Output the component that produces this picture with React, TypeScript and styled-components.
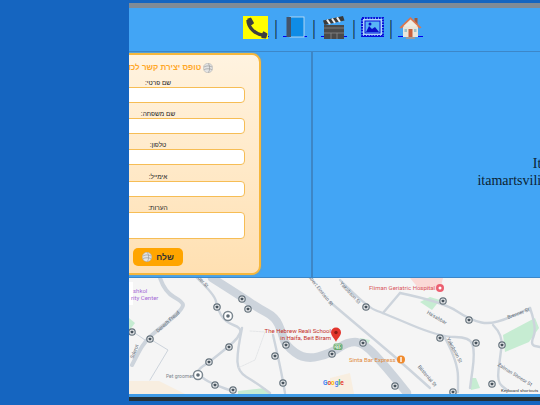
import React from "react";
import styled, { createGlobalStyle } from "styled-components";

const GlobalStyle = createGlobalStyle`
  html, body {
    margin: 0;
    height: 405px;
    overflow: hidden;
    background: #1565c0;
  }
  #root { height: 405px; }
`;

const Page = styled.div`
  display: flex;
  width: 540px;
  height: 405px;
  background: #1565c0;
`;

const Sidebar = styled.aside`
  flex: 0 0 129px;
  background: #1565c0;
`;

const Main = styled.main`
  flex: 1;
  min-width: 0;
  display: flex;
  flex-direction: column;
  overflow: hidden;
  padding: 3px 0 4px;
`;

const TopBar = styled.div`
  height: 5px;
  flex: none;
  background: #808b96;
`;

const Nav = styled.nav`
  height: 43px;
  flex: none;
  box-sizing: border-box;
  padding: 8px 3px 0 0;
  display: flex;
  align-items: flex-start;
  justify-content: center;
  gap: 6px;
  background: #42a5f5;
`;

const NavLink = styled.a<{ w: number }>`
  position: relative;
  width: ${({ w }) => w}px;
  height: 23px;
  display: flex;
  justify-content: center;
  &::after {
    content: "";
    position: absolute;
    left: 0;
    right: 0;
    bottom: 2px;
    height: 1px;
    background: #0000ee;
  }
  svg { position: relative; z-index: 1; }
`;

const Sep = styled.span`
  width: 2px;
  display: flex;
  justify-content: center;
  font: 20px "Liberation Serif", serif;
  line-height: 23px;
  color: #12304a;
`;

const ContentRow = styled.section`
  height: 227px;
  flex: none;
  display: flex;
  border-top: 1px solid #3c87c9;
  border-bottom: 1px solid #3c87c9;
  box-sizing: border-box;
  background: #42a5f5;
`;

const FormColumn = styled.div`
  flex: 0 0 182px;
  display: flex;
  justify-content: flex-end;
  overflow: hidden;
  border-right: 2px solid #3d86c6;
`;

const ContactForm = styled.form`
  flex: 0 0 206px;
  box-sizing: border-box;
  margin: 1px 50px 2px 0;
  height: 222px;
  padding: 7px 14px 0;
  direction: rtl;
  display: flex;
  flex-direction: column;
  align-items: center;
  border: 2px solid #f6b73c;
  border-radius: 9px;
  background: linear-gradient(180deg, #fff3e0, #ffe0b2);
  box-shadow: 0 0 2px rgba(230, 150, 30, 0.5);
  font-family: "Liberation Sans", sans-serif;
`;

const FormTitle = styled.h2`
  margin: 0 0 6.5px 6px;
  display: flex;
  align-items: center;
  gap: 2px;
  height: 11px;
  white-space: nowrap;
  font-size: 8px;
  font-weight: bold;
  color: #ffa726;
`;

const Field = styled.div`
  display: flex;
  flex-direction: column;
  align-items: center;
  margin-bottom: 8.4px;
`;

const FieldLabel = styled.label`
  height: 7px;
  line-height: 6px;
  font-size: 6.5px;
  color: #222;
`;

const TextInput = styled.input`
  display: block;
  box-sizing: border-box;
  width: 174px;
  height: 16px;
  padding: 0;
  background: #fff;
  border: 1.5px solid #f6bd55;
  border-radius: 4px;
  outline: none;
`;

const NotesInput = styled.textarea`
  display: block;
  box-sizing: border-box;
  width: 174px;
  height: 27px;
  padding: 0;
  background: #fff;
  border: 1.5px solid #f6bd55;
  border-radius: 4px;
  outline: none;
  resize: none;
`;

const SendButton = styled.button`
  margin-top: 1px;
  width: 50px;
  height: 18px;
  padding: 0;
  display: flex;
  align-items: center;
  justify-content: center;
  gap: 4px;
  border: none;
  border-radius: 5px;
  background: #ffa500;
  color: #333;
  font: bold 8.5px "Liberation Sans", sans-serif;
`;

const InfoPanel = styled.div`
  flex: 0 0 472px;
  box-sizing: border-box;
  padding-top: 103px;
  text-align: center;
  font: 14px/17px "Liberation Serif", serif;
  color: #0b1f33;
`;

const Name = styled.span`
  margin-left: 4px;
`;

const MapFrame = styled.div`
  flex: 1;
  min-height: 0;
  background: #f5f5f5;
  svg { display: block; }
`;

const Footer = styled.div`
  height: 4px;
  flex: none;
  background: #263238;
  border-top: 3px solid #3f9be6;
`;

const Ball = ({ size }: { size: number }) => (
  <svg width={size} height={size} viewBox="0 0 20 20">
    <circle cx="10" cy="10" r="9.5" fill="#e4e4e4" stroke="#a8a8a8" />
    <path d="M2 8c5-3 11-3 16 0M2 13c5-2 11-2 16 0M11 1c3 5 3 13 0 18" fill="none" stroke="#9a9a9a" strokeWidth="1.4" />
  </svg>
);

const PhoneIcon = () => (
  <svg width="26" height="23" viewBox="0 0 26 23">
    <rect x="0" width="25" height="23" fill="#ffff00" />
    <path d="M5 4C5 11 12 19 21 19" fill="none" stroke="#3f3f3f" strokeWidth="3.4" />
    <path d="M4.500 3.500 7.500 2.500l2.500 4.500-3 2M20 16l3.500 2-1 3.500-4-.5" fill="#3f3f3f" stroke="#3f3f3f" strokeWidth="1.800" strokeLinejoin="round" />
  </svg>
);

const BookIcon = () => (
  <svg width="24" height="23" viewBox="0 0 24 23">
    <rect x="7" y="1" width="14" height="20" fill="#0f8ce6" stroke="#cfe3f2" strokeWidth=".8" />
    <rect x="3.500" y="1" width="4.500" height="20" fill="#44546a" />
  </svg>
);

const ClapperIcon = () => (
  <svg width="26" height="23" viewBox="0 0 26 23">
    <rect x="3" y="9" width="20" height="14" fill="#4a4a4a" />
    <path d="M3 12h20M3 17h20M10 17v6M16 17v6" stroke="#8a8a8a" strokeWidth=".8" />
    <path d="M2 4.500 22 0l1.500 4.500L3.500 9z" fill="#3a3a3a" />
    <path d="M6 3.600 9 8M11 2.500 14 7M16 1.400 19 6" stroke="#eee" strokeWidth="2" />
  </svg>
);

const PictureIcon = () => (
  <svg width="23" height="23" viewBox="0 0 23 23">
    <rect x="1" y="2" width="21" height="18" fill="#a8d4fa" stroke="#0a10d8" strokeWidth="2" strokeDasharray="2 .8" />
    <rect x="4" y="5" width="15" height="12" fill="#58b4f6" stroke="#0a10d8" />
    <path d="M5 16l3-6 3 3 3-2 4 5z" fill="#0a10c8" />
    <circle cx="9" cy="8" r="1.500" fill="#0a10c8" />
  </svg>
);

const HouseIcon = () => (
  <svg width="25" height="23" viewBox="0 0 25 23">
    <rect x="16.500" y="2" width="3" height="6" fill="#a05a3c" />
    <path d="M5 10h15v11H5z" fill="#e9e6dc" />
    <path d="M1.500 11.500 12.500 1l11 10.500-2 1L12.500 5l-9 7.500z" fill="#d9764f" />
    <path d="M12.500 3.500 5 10.500h15z" fill="#f0ece0" />
    <rect x="10.500" y="13" width="4" height="8" fill="#c8603c" />
    <rect x="6.500" y="13" width="2.500" height="3" fill="#9fc4c8" />
    <rect x="16" y="13" width="2.500" height="3" fill="#9fc4c8" />
    <rect x="8" y="21" width="9" height="2" fill="#9c9c9c" />
  </svg>
);

// rounds the corners of a road given as a list of map points
const smooth = (pts: number[][]) => {
  let d = `M${pts[0][0]} ${pts[0][1]}`;
  for (let i = 1; i < pts.length - 1; i++) {
    const mx = (pts[i][0] + pts[i + 1][0]) / 2;
    const my = (pts[i][1] + pts[i + 1][1]) / 2;
    d += `Q${pts[i][0]} ${pts[i][1]} ${mx} ${my}`;
  }
  const last = pts[pts.length - 1];
  return `${d}L${last[0]} ${last[1]}`;
};

const busStops: [number, number][] = [
  [242, 299], [248, 309], [217, 307], [229, 347], [209, 362], [215, 385], [233, 390],
  [283, 383], [275, 356], [286, 345], [332, 354], [132, 332], [150, 339], [366, 307],
  [443, 301], [469, 320], [440, 338], [476, 343], [502, 345], [363, 343], [395, 386],
  [453, 392], [492, 384],
];

const bigStops: [number, number][] = [[228, 316], [198, 375]];

const thinRoads = [
  [[197, 278], [215, 295], [217, 308], [225, 322], [242, 328], [238, 338], [228, 347], [208, 363], [197, 370], [202, 378], [215, 385], [235, 392]],
  [[242, 328], [237, 352], [238, 372], [255, 382], [270, 393]],
  [[273, 335], [280, 365], [285, 393]],
  [[340, 280], [367, 307], [383, 313], [440, 337], [470, 337], [475, 352], [470, 388]],
  [[400, 293], [383, 313]],
  [[400, 293], [443, 302], [470, 320], [493, 325], [530, 308]],
  [[493, 325], [503, 335], [500, 358], [497, 382], [507, 390]],
  [[530, 308], [537, 328], [530, 345], [540, 347]],
  [[330, 302], [357, 325], [393, 355], [430, 388]],
  [[445, 338], [458, 362], [458, 392]],
];

const mainRoad = [[212, 278], [242, 297], [258, 308], [275, 317], [282, 332], [285, 345], [305, 360], [332, 353], [347, 342], [363, 342], [387, 368], [407, 393]];
const curlRoad = [[160, 278], [165, 292], [183, 302], [183, 308], [168, 322], [145, 340], [132, 365]];

const roadNames: [string, number, number, number][] = [
  ["Derech Freud", 169, 323, -42],
  ["Albert Einstein St", 319, 291, 52],
  ["Yakobson St", 349, 294, 47],
  ["Ha'sabbar", 436, 319, 30],
  ["Yakobson St", 453, 351, 62],
  ["Bilstenlal St", 426, 377, 50],
  ["Brenner St", 519, 315, -20],
  ["Zalman Shneor St", 514, 376, 32],
  ["der St", 202, 283, 48],
  ["Sderot", 136, 352, -68],
];

const MapView = () => (
  <svg width="411" height="116" viewBox="129 278 411 116" fontFamily="Roboto, sans-serif">
    <rect x="129" y="278" width="411" height="116" fill="#f5f5f5" />
    <path d="M129 381h30l26 13H129z" fill="#f8eee0" />
    <path d="M330 378l20-5 4 21h-24z" fill="#f8eee0" />
    <path d="M410 278h33l-3 12-20 0z" fill="#fbd9d6" />
    <path d="M420 302l10-5 10 3-8 10z" fill="#c6ecd2" />
    <path d="M503 335l32-17 4 10-10 14-24 10z" fill="#c6ecd2" />
    <path d="M471 378h5l4 10-9 2z" fill="#c6ecd2" />
    <path d="M360 338l10 2-4 9-6-4z" fill="#c6ecd2" />
    <path d="M129 318l6 5-6 8z" fill="#c6ecd2" />
    <path d="M238 391l27-3 6 6h-33z" fill="#c6ecd2" />
    <rect x="129" y="282" width="4" height="23" fill="#fff" />
    <g fill="none" stroke="#cdd4dc" strokeLinecap="round" strokeLinejoin="round">
      <path d={smooth(mainRoad)} strokeWidth="8.500" />
      <path d={smooth(curlRoad)} strokeWidth="4" />
      {thinRoads.map((pts) => (
        <path key={pts[0].join()} d={smooth(pts)} strokeWidth="2.400" />
      ))}
      <path d="M145 340 129 329M150 339 168 350 150 380" strokeWidth="1" />
      <path d="M250 331 265 332 255 360 238 368" stroke="#dfe2e5" strokeWidth=".8" strokeDasharray="2 1" />
    </g>
    {busStops.map(([x, y]) => (
      <g key={`${x}-${y}`}>
        <circle cx={x} cy={y} r="3.200" fill="#e8eaec" stroke="#66737d" strokeWidth="1.200" />
        <rect x={x - 1.300} y={y - 1.300} width="2.600" height="2.600" rx=".5" fill="#46525c" />
      </g>
    ))}
    {bigStops.map(([x, y]) => (
      <g key={`${x}-${y}`}>
        <circle cx={x} cy={y} r="4.500" fill="#fff" stroke="#7b8790" strokeWidth="1.500" />
        <circle cx={x} cy={y} r="1.800" fill="#5d6a74" />
      </g>
    ))}
    {roadNames.map(([name, x, y, angle]) => (
      <text key={name + x} x={x} y={y} fontSize="5" fill="#5f6b75" textAnchor="middle" transform={`rotate(${angle} ${x} ${y})`}>
        {name}
      </text>
    ))}
    <g fontSize="6" fill="#a56bd6">
      <text x="133" y="293">shkol</text>
      <text x="131" y="300">rity Center</text>
    </g>
    <g fontSize="6" fill="#c5302a" textAnchor="end">
      <text x="331" y="333">The Hebrew Reali School</text>
      <text x="331" y="339.500">in Haifa, Beit Biram</text>
    </g>
    <text x="369" y="290" fontSize="6" fill="#d9585f">Fliman Geriatric Hospital</text>
    <circle cx="440" cy="288" r="4" fill="#ec5f70" />
    <circle cx="440" cy="288" r="1.500" fill="#fff" />
    <text x="349" y="362" fontSize="6" fill="#e08a3c">Sinta Bar Express</text>
    <circle cx="401" cy="359.500" r="4" fill="#f08a2c" />
    <rect x="400.300" y="357" width="1.400" height="5" fill="#fff" />
    <text x="166" y="378" fontSize="5" fill="#7c858d">Pet groomer</text>
    <path d="M336 342c-1-3-5-6-5-9.500a5 5 0 0 1 10 0c0 3.500-4 6.500-5 9.500z" fill="#e2352d" />
    <circle cx="336" cy="332.500" r="1.700" fill="#8e1b16" />
    <rect x="334" y="344" width="8" height="5.500" rx="1" fill="#d7eed7" stroke="#4f9d55" strokeWidth=".8" />
    <text x="338" y="348.500" fontSize="4.500" fill="#2f7d38" textAnchor="middle">218</text>
    <text x="323" y="385" fontSize="6.500" fontWeight="bold">
      <tspan fill="#4285f4">G</tspan>
      <tspan fill="#ea4335">o</tspan>
      <tspan fill="#fbbc05">o</tspan>
      <tspan fill="#4285f4">g</tspan>
      <tspan fill="#34a853">l</tspan>
      <tspan fill="#ea4335">e</tspan>
    </text>
    <text x="501" y="392" fontSize="4.300" fill="#333">Keyboard shortcuts</text>
  </svg>
);

const fields = ["שם פרטי:", "שם משפחה:", "טלפון:", "אימייל:"];

export default function App() {
  return (
    <Page>
      <GlobalStyle />
      <Sidebar />
      <Main>
        <TopBar />
        <Nav>
          <NavLink w={26}><PhoneIcon /></NavLink>
          <Sep>|</Sep>
          <NavLink w={24}><BookIcon /></NavLink>
          <Sep>|</Sep>
          <NavLink w={26}><ClapperIcon /></NavLink>
          <Sep>|</Sep>
          <NavLink w={23}><PictureIcon /></NavLink>
          <Sep>|</Sep>
          <NavLink w={25}><HouseIcon /></NavLink>
        </Nav>
        <ContentRow>
          <FormColumn>
            <ContactForm onSubmit={(e) => e.preventDefault()}>
              <FormTitle>
                <Ball size={10} />
                טופס יצירת קשר לכדורעף
              </FormTitle>
              {fields.map((label) => (
                <Field key={label}>
                  <FieldLabel>{label}</FieldLabel>
                  <TextInput type="text" />
                </Field>
              ))}
              <Field>
                <FieldLabel>הערות:</FieldLabel>
                <NotesInput />
              </Field>
              <SendButton type="submit">
                שלח
                <Ball size={10} />
              </SendButton>
            </ContactForm>
          </FormColumn>
          <InfoPanel>
            <Name>Itamar</Name>
            <br />
            itamartsvili1@gmail.com
          </InfoPanel>
        </ContentRow>
        <MapFrame>
          <MapView />
        </MapFrame>
        <Footer />
      </Main>
    </Page>
  );
}
